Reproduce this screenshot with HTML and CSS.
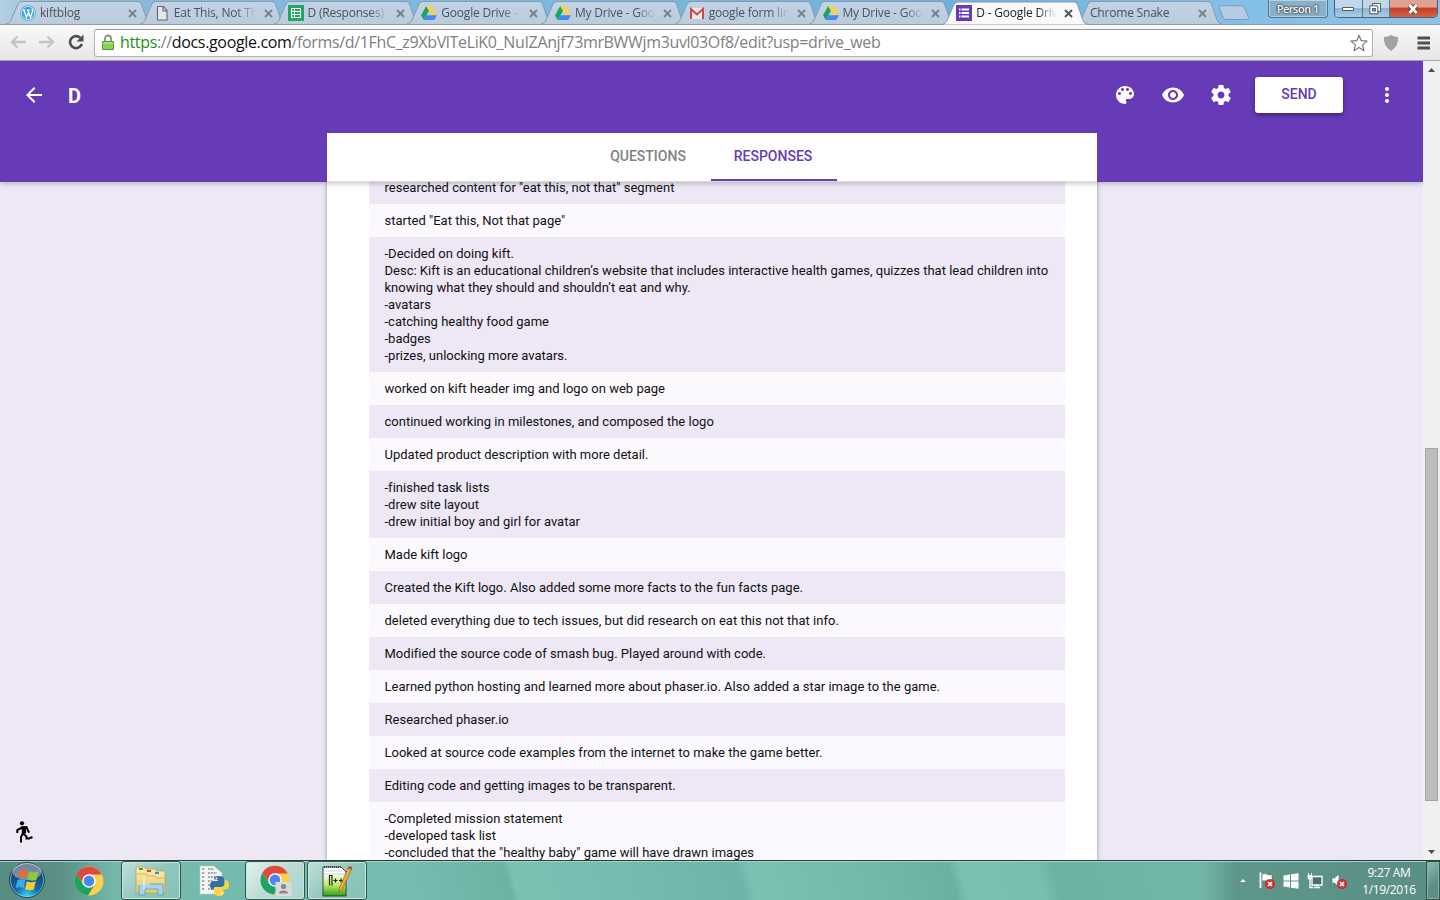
FILE: index.html
```html
<!DOCTYPE html>
<html lang="en">
<head>
<meta charset="utf-8">
<title>D - Google Drive</title>
<link rel="stylesheet" href="styles.css">
</head>
<body>
<svg class="defs" width="0" height="0" aria-hidden="true">
  <defs>
    <linearGradient id="tabfill" x1="0" y1="0" x2="0" y2="1"><stop offset="0" stop-color="#c2d3e5"/><stop offset="1" stop-color="#b9cbdd"/></linearGradient>
    <radialGradient id="orb" cx=".5" cy=".95" r=".8"><stop offset="0" stop-color="#35d5fa"/><stop offset=".4" stop-color="#0e6fae"/><stop offset="1" stop-color="#1d3f63"/></radialGradient>
    <linearGradient id="folder" x1="0" y1="0" x2="0" y2="1"><stop offset="0" stop-color="#fbeeb2"/><stop offset="1" stop-color="#e9c869"/></linearGradient>
    <linearGradient id="note" x1="0" y1="0" x2="0" y2="1"><stop offset=".2" stop-color="#fff"/><stop offset=".6" stop-color="#c2ee6a"/><stop offset="1" stop-color="#2f9e16"/></linearGradient>
    <symbol id="shape" viewBox="0 0 146 24"><path d="M0 24C3 23.500 4 22 5 20L12 4Q13.500 1.500 16 1.500H132Q134.500 1.500 135.500 4L141 20Q142 23.500 146 24"/></symbol>
    <symbol id="drive" viewBox="0 0 16 14"><path fill="#1da462" d="M5.300 0 0 9.300 2.700 14 8 4.700z"/><path fill="#ffcf48" d="M5.300 0H10.700L16 9.300H10.700z"/><path fill="#4688f4" d="M5.300 9.300H16L13.300 14H2.700z"/></symbol>
    <symbol id="chrome" viewBox="0 0 30 30"><circle cx="15" cy="15" r="14.500" fill="#fcd04b"/><path fill="#dd4b3e" d="M2.300 8A14.500 14.500 0 0 1 27.800 8.500H15L9.300 18z"/><path fill="#1da362" d="M2.300 8A14.500 14.500 0 0 0 14 29.500L20.500 19 15 21.500 9.400 18.500z"/><circle cx="15" cy="15" r="6.800" fill="#fff"/><circle cx="15" cy="15" r="5.400" fill="#4a87ee"/></symbol>
    <symbol id="redx" viewBox="0 0 10 10"><circle cx="5" cy="5" r="4.800" fill="#d9302c" stroke="#a31b1b" stroke-width=".4"/><path d="M3 3l4 4M7 3 3 7" stroke="#fff" stroke-width="1.600"/></symbol>
  </defs>
</svg>
<div class="window">
  <div class="tabstrip">
    <div class="tabs">
      <div class="tab"><svg class="bg"><use href="#shape"/></svg>
        <svg class="fav" viewBox="0 0 16 16"><circle cx="8" cy="8" r="7.800" fill="#3aa5d4"/><circle cx="8" cy="8" r="6.700" fill="none" stroke="#e8f3f9" stroke-width=".8"/><path d="M2.800 5.200h2.500M6.800 5.200h3M4 5.500l2.500 7L8.300 8M7.800 5.500l2.700 7L12.600 6q0-1.500-1-2.300" fill="none" stroke="#fff" stroke-width="1.300"/></svg>
        <span class="title">kiftblog</span><svg class="x" viewBox="0 0 9 9"><path d="M1 1l7 7M8 1 1 8"/></svg></div>
      <div class="tab"><svg class="bg"><use href="#shape"/></svg>
        <svg class="fav" viewBox="0 0 16 16"><path d="M3.500 1.500h6l3.500 4v9.500h-9.500zM9 1.500v4.500h4" fill="#e4e9ee" stroke="#666" stroke-width="1.100"/></svg>
        <span class="title">Eat This, Not Th</span><svg class="x" viewBox="0 0 9 9"><path d="M1 1l7 7M8 1 1 8"/></svg></div>
      <div class="tab"><svg class="bg"><use href="#shape"/></svg>
        <svg class="fav" viewBox="0 0 16 16"><path fill="#23a566" d="M0 0h16v16H0z"/><path d="M3.500 3.500h9v9h-9zM3.500 6.500h9M3.500 9.500h9M6.500 3.500v9" fill="none" stroke="#fff"/></svg>
        <span class="title">D (Responses)</span><svg class="x" viewBox="0 0 9 9"><path d="M1 1l7 7M8 1 1 8"/></svg></div>
      <div class="tab"><svg class="bg"><use href="#shape"/></svg>
        <svg class="fav"><use href="#drive"/></svg>
        <span class="title">Google Drive -</span><svg class="x" viewBox="0 0 9 9"><path d="M1 1l7 7M8 1 1 8"/></svg></div>
      <div class="tab"><svg class="bg"><use href="#shape"/></svg>
        <svg class="fav"><use href="#drive"/></svg>
        <span class="title">My Drive - Goo</span><svg class="x" viewBox="0 0 9 9"><path d="M1 1l7 7M8 1 1 8"/></svg></div>
      <div class="tab"><svg class="bg"><use href="#shape"/></svg>
        <svg class="fav" viewBox="0 0 16 16"><path fill="#ece9ea" d="M1 3h14v11H1z"/><path d="M2 14V4l6 5.500L14 4v10" fill="none" stroke="#cf4a41" stroke-width="2"/></svg>
        <span class="title">google form lin</span><svg class="x" viewBox="0 0 9 9"><path d="M1 1l7 7M8 1 1 8"/></svg></div>
      <div class="tab"><svg class="bg"><use href="#shape"/></svg>
        <svg class="fav"><use href="#drive"/></svg>
        <span class="title">My Drive - Goo</span><svg class="x" viewBox="0 0 9 9"><path d="M1 1l7 7M8 1 1 8"/></svg></div>
      <div class="tab active"><svg class="bg"><use href="#shape"/></svg>
        <svg class="fav" viewBox="0 0 16 16"><path fill="#673ab7" d="M0 0h16v16H0z"/><path d="M3 4.500h1.500M3 8h1.500M3 11.500h1.500M5.500 4.500h7.500M5.500 8h7.500M5.500 11.500h7.500" stroke="#fff" stroke-width="1.800"/></svg>
        <span class="title">D - Google Driv</span><svg class="x" viewBox="0 0 9 9"><path d="M1 1l7 7M8 1 1 8"/></svg></div>
      <div class="tab nofav"><svg class="bg"><use href="#shape"/></svg>
        <span class="title">Chrome Snake</span><svg class="x" viewBox="0 0 9 9"><path d="M1 1l7 7M8 1 1 8"/></svg></div>
    </div>
    <svg class="newtab" viewBox="0 0 32 16"><path d="M1 2Q1 .7 3 .7H23Q25.500.7 26.500 3L30.500 12.500Q31 14.500 29 14.500H8Q6 14.500 5 12z" fill="#b4cde2" stroke="#7f9db8"/></svg>
    <div class="person">Person 1</div>
    <div class="winbtns">
      <div class="wb min"><svg width="14" height="8" viewBox="0 0 14 8"><path d="M1.500 2.500h11v3h-11z" fill="#fff" stroke="#4b5b6b"/></svg></div>
      <div class="wb max"><svg width="13" height="12" viewBox="0 0 13 12"><path d="M3.500.5h8v8h-8z" fill="#fff" stroke="#4b5b6b"/><path d="M.8 2.800h8v8h-8z" fill="#fff" stroke="#4b5b6b"/><path d="M3.500 5.500h3v2.500h-3z" fill="#8fb2d0" stroke="#4b5b6b"/></svg></div>
      <div class="wb close"><svg width="14" height="12" viewBox="0 0 14 12"><path d="M3.500 2l7 8M10.500 2l-7 8" stroke="#5a3a3a" stroke-width="4.500"/><path d="M3.500 2l7 8M10.500 2l-7 8" stroke="#fff" stroke-width="2.800"/></svg></div>
    </div>
  </div>

  <div class="toolbar">
    <svg class="nav" viewBox="0 0 18 16"><path d="M17 8H3M8.500 2.500 3 8l5.500 5.500" fill="none" stroke="#c4c4c4" stroke-width="2.300"/></svg>
    <svg class="nav fwd" viewBox="0 0 18 16"><path d="M1 8h14M9.500 2.500 15 8l-5.500 5.500" fill="none" stroke="#c4c4c4" stroke-width="2.300"/></svg>
    <svg class="reload" viewBox="0 0 16 16"><path d="M12.300 3.800A6 6 0 1 0 13.800 10" fill="none" stroke="#4e4e4e" stroke-width="2.600"/><path d="M15.500.5v7h-7z" fill="#4e4e4e"/></svg>
    <div class="omnibox">
      <svg class="lock" viewBox="0 0 12 16"><path d="M3 8V4.500a3 3 0 0 1 6 0V8" fill="none" stroke="#8d8d8d" stroke-width="1.800"/><path d="M.5 7.500h11v8H.5z" fill="#8ed05c" stroke="#529c2c"/><path d="M1.500 9h9" stroke="#c4eda5"/></svg>
      <span class="url"><span class="sec">https</span>://<span class="host">docs.google.com</span>/forms/d/1FhC_z9XbVlTeLiK0_NuIZAnjf73mrBWWjm3uvl03Of8/edit?usp=drive_web</span>
      <svg class="star" viewBox="0 0 18 18"><path d="M9 1.200l2.200 5.500 5.900.4-4.500 3.800 1.400 5.800L9 13.600l-5 3.100 1.400-5.800L.9 7.100l5.900-.4z" fill="#fff" stroke="#777" stroke-width="1.200" stroke-linejoin="round"/></svg>
    </div>
    <svg class="shield" viewBox="0 0 16 16"><path d="M8 0Q11 2 15 2Q16 11 8 16Q0 11 1 2Q5 2 8 0z" fill="#a2a2a2"/></svg>
    <svg class="menu" viewBox="0 0 14 14"><path d="M.5 2h12.500M.5 7h12.500M.5 12h12.500" stroke="#4f4f4f" stroke-width="3"/></svg>
  </div>

  <div class="viewport">
    <div class="page">
      <header class="appbar">
        <div class="approw">
          <svg class="i back" viewBox="0 0 24 24"><path d="M20 11H7.830l5.590-5.590L12 4l-8 8 8 8 1.410-1.410L7.830 13H20v-2z"/></svg>
          <span class="doc">D</span>
          <svg class="i" viewBox="0 0 24 24"><path d="M12 3c-4.970 0-9 4.030-9 9s4.030 9 9 9c.83 0 1.500-.67 1.500-1.500 0-.39-.15-.74-.39-1.010-.23-.26-.38-.61-.38-.99 0-.83.67-1.500 1.500-1.500H16c2.760 0 5-2.240 5-5 0-4.420-4.030-8-9-8zm-5.500 9c-.83 0-1.500-.67-1.500-1.500S5.670 9 6.500 9 8 9.670 8 10.500 7.330 12 6.500 12zm3-4C8.670 8 8 7.330 8 6.500S8.670 5 9.500 5s1.500.67 1.500 1.500S10.330 8 9.500 8zm5 0c-.83 0-1.500-.67-1.500-1.500S13.670 5 14.500 5s1.500.67 1.500 1.500S15.330 8 14.500 8zm3 4c-.83 0-1.500-.67-1.500-1.500S16.670 9 17.500 9s1.500.67 1.500 1.500-.67 1.500-1.500 1.500z"/></svg>
          <svg class="i" viewBox="0 0 24 24"><path d="M12 4.500C7 4.500 2.730 7.610 1 12c1.730 4.390 6 7.500 11 7.500s9.270-3.110 11-7.500c-1.730-4.390-6-7.500-11-7.500zM12 17c-2.760 0-5-2.240-5-5s2.240-5 5-5 5 2.240 5 5-2.240 5-5 5zm0-8c-1.660 0-3 1.340-3 3s1.340 3 3 3 3-1.340 3-3-1.340-3-3-3z"/></svg>
          <svg class="i" viewBox="0 0 24 24"><path d="M19.430 12.980c.04-.32.07-.64.07-.98s-.03-.66-.07-.98l2.110-1.650c.19-.15.24-.42.12-.64l-2-3.460c-.12-.22-.39-.3-.61-.22l-2.490 1c-.52-.4-1.080-.73-1.690-.98l-.38-2.650C14.460 2.180 14.250 2 14 2h-4c-.25 0-.46.18-.49.42l-.38 2.650c-.61.25-1.170.59-1.690.98l-2.490-1c-.23-.09-.49 0-.61.22l-2 3.460c-.13.22-.07.49.12.64l2.110 1.650c-.04.32-.07.65-.07.98s.03.66.07.98l-2.110 1.650c-.19.15-.24.42-.12.64l2 3.460c.12.22.39.3.61.22l2.490-1c.52.4 1.080.73 1.690.98l.38 2.650c.03.24.24.42.49.42h4c.25 0 .46-.18.49-.42l.38-2.650c.61-.25 1.170-.59 1.690-.98l2.490 1c.23.09.49 0 .61-.22l2-3.460c.12-.22.07-.49-.12-.64l-2.110-1.650zM12 15.500c-1.930 0-3.500-1.570-3.500-3.500s1.570-3.500 3.500-3.500 3.500 1.570 3.500 3.500-1.570 3.500-3.500 3.500z"/></svg>
          <div class="send">SEND</div>
          <svg class="i more" viewBox="0 0 24 24"><path d="M12 8c1.100 0 2-.9 2-2s-.9-2-2-2-2 .9-2 2 .9 2 2 2zm0 2c-1.100 0-2 .9-2 2s.9 2 2 2 2-.9 2-2-.9-2-2-2zm0 6c-1.100 0-2 .9-2 2s.9 2 2 2 2-.9 2-2-.9-2-2-2z"/></svg>
        </div>
        <nav class="formtabs"><span class="ft">QUESTIONS</span><span class="ft sel">RESPONSES</span></nav>
      </header>
      <main class="card">
        <div class="row">researched content for "eat this, not that" segment</div>
        <div class="row">started "Eat this, Not that page"</div>
        <div class="row">-Decided on doing kift.
Desc: Kift is an educational children’s website that includes interactive health games, quizzes that lead children into
knowing what they should and shouldn’t eat and why.
-avatars
-catching healthy food game
-badges
-prizes, unlocking more avatars.</div>
        <div class="row">worked on kift header img and logo on web page</div>
        <div class="row">continued working in milestones, and composed the logo</div>
        <div class="row">Updated product description with more detail.</div>
        <div class="row">-finished task lists
-drew site layout
-drew initial boy and girl for avatar</div>
        <div class="row">Made kift logo</div>
        <div class="row">Created the Kift logo. Also added some more facts to the fun facts page.</div>
        <div class="row">deleted everything due to tech issues, but did research on eat this not that info.</div>
        <div class="row">Modified the source code of smash bug. Played around with code.</div>
        <div class="row">Learned python hosting and learned more about phaser.io. Also added a star image to the game.</div>
        <div class="row">Researched phaser.io</div>
        <div class="row">Looked at source code examples from the internet to make the game better.</div>
        <div class="row">Editing code and getting images to be transparent.</div>
        <div class="row">-Completed mission statement
-developed task list
-concluded that the "healthy baby" game will have drawn images</div>
      </main>
      <svg class="runner" viewBox="0 0 18 22"><circle cx="6" cy="2.300" r="2.100"/><path d="M1.300 12V9L6 6.500 10.500 6l1.800 4.500 1.200 1M7 12.500l3.500 3v2h2.500l3.500-1.500M7 12l-2 4v5.500" fill="none" stroke="#000" stroke-width="2"/><path d="M5.500 5.500h4.500L10 12.500 6 13z"/></svg>
    </div>
    <div class="scrollbar">
      <svg class="arrow" viewBox="0 0 7 4"><path d="M0 4 3.500 0 7 4z"/></svg>
      <div class="thumb"></div>
      <svg class="arrow" viewBox="0 0 7 4"><path d="M0 0h7L3.500 4z"/></svg>
    </div>
  </div>

  <div class="taskbar">
    <svg class="start" viewBox="0 0 38 38"><circle cx="19" cy="19" r="17.500" fill="url(#orb)" stroke="#27455c"/><circle cx="19" cy="19" r="16.500" fill="none" stroke="#b5d0dc" stroke-width=".9" opacity=".7"/><ellipse cx="19" cy="10.500" rx="14.500" ry="8.500" fill="#fff" opacity=".38"/><path fill="#ee6a2c" d="M12 9.500q3.500-2 7.500.3l-1.700 8q-3.500-2.300-7.500-.5z"/><path fill="#93c83e" d="M21 10.500q4 2 9.500 0l-2 8.200q-4.500 2-9-.2z"/><path fill="#3da9ea" d="M9.500 19q3.500-1.800 7.800.3l-1.600 8q-3.500-2-8-.5z"/><path fill="#fccb30" d="M18.800 20.200q4 2 9 0l-2 8.300q-4.500 1.700-8.700-.3z"/></svg>
    <div class="tb plain"><svg width="30" height="30"><use href="#chrome"/></svg></div>
    <div class="tb open"><svg width="32" height="30" viewBox="0 0 32 30"><path d="M1 3l1-2h8l1 2h10v2h9v22H1z" fill="url(#folder)" stroke="#c09c44" stroke-width=".7"/><path fill="#2fa336" d="M4 2h4v2H4z"/><path fill="#cf4733" d="M12 4h4v2h-4z"/><path fill="#3d86d8" d="M20 6h4v2h-4z"/><path d="M2 8h9l1 2h8l1 2h9" stroke="#d6b35d" fill="none"/><path d="M4 29V18h24v11h-5v-6H10v6z" fill="#a4d4ee" stroke="#5799c2" stroke-width=".8"/><path d="M9 12v12M3 18h12" stroke="#fff" stroke-width=".8"/></svg></div>
    <div class="tb plain"><svg width="32" height="32" viewBox="0 0 32 32"><path d="M2 1h14l8 7v21H2z" fill="#f4f4f4" stroke="#c2c8c6" stroke-width=".6"/><path d="M4 4h3M10 4h6M4 8h3M10 8h9M4 12h3M10 12h10M4 16h3M10 16h5M4 20h3M10 20h4M4 24h3M10 24h6" stroke="#8d9291" stroke-width="1.300" stroke-dasharray="2 .8"/><path d="M16 14q0-3 5-3t5 3v5q0 3-3 3h-5q-2.500 0-2.500 3-3.500-.5-3.500-5 0-4 4-4h5" fill="#356f9f"/><path d="M27 15q4 .5 4 5t-4 4.500h-5v1h4v2.500q0 3-5 3t-5-3V25q0-3 3-3h4q4 0 4-4z" fill="#fdd340"/><circle cx="18.500" cy="13.500" r=".9" fill="#fff"/><circle cx="23.500" cy="28.500" r=".9" fill="#fff"/></svg></div>
    <div class="tb open bright"><svg width="32" height="32" viewBox="0 0 32 32"><use href="#chrome" x="0" y="0" width="30" height="30"/><path fill="#d9dbda" d="M15.500 17h16v14h-16z"/><circle cx="23.500" cy="21.500" r="2.600" fill="#888"/><path d="M19 28.500q0-3 4.500-3t4.500 3z" fill="#888"/></svg></div>
    <div class="tb open"><svg width="32" height="32" viewBox="0 0 32 32"><path d="M2 2h18l5 5v24H2z" fill="url(#note)" stroke="#333" stroke-width=".9"/><path d="M3 6h18M3 9h21" stroke="#b9c8e0" stroke-width=".8"/><path d="M3 2h17" stroke="#444" stroke-width="2" stroke-dasharray="1 1"/><path d="M8.500 20.500v-10h2.500v10M12.500 15.500h4M14.500 13.500v4M18 15.500h4M20 13.500v4" fill="none" stroke="#222" stroke-width="1.200"/><path d="M27 3l3.500 1.500L21 25l-3 2 .2-3.500z" fill="#f2a93b" stroke="#8b5a1c" stroke-width=".6"/><path d="M27 3l1-2 3.500 1.500-1 2z" fill="#b34545"/></svg></div>
    <div class="tray">
      <svg width="8" height="5" viewBox="0 0 8 5"><path d="M.3 4.500 4 .5l3.700 4z" fill="#fff" stroke="#41665f" stroke-width=".5"/></svg>
      <svg class="flag" width="16" height="17" viewBox="0 0 16 17"><path d="M1.500.5v15.500" stroke="#fff" stroke-width="1.800"/><path d="M3 2q3-1 5 .3t5 .2v7q-3 .7-5-.3T3 9z" fill="#fff" stroke="#3c625b" stroke-width=".5"/><use href="#redx" x="6" y="7" width="10" height="10"/></svg>
      <svg class="win" width="16" height="16" viewBox="0 0 16 16"><path fill="#fff" d="M.5 2.500 7 1.500v6H.5zM8 1.300 15.500.2v7.300H8zM.5 8.500H7v6L.5 13.500zM8 8.500h7.500v7.300L8 14.700z"/></svg>
      <svg class="net" width="16" height="16" viewBox="0 0 16 16"><path d="M5 3.500h10v8.500H5z" fill="#44726a" stroke="#fff" stroke-width="1.300"/><path d="M7 14.500h6M10 12v2M3 6v8.500h3" stroke="#fff" stroke-width="1.300" fill="none"/><path d="M1 2.500h4V5L4 6.500H2L1 5zM1.500 0v3M4.500 0v3" fill="#fff" stroke="#fff" stroke-width=".9"/></svg>
      <svg class="vol" width="16" height="16" viewBox="0 0 16 16"><path d="M1 5h2.500L8 1v13L3.500 10H1z" fill="#fff" stroke="#476b65" stroke-width=".6"/><use href="#redx" x="6" y="6" width="10" height="10"/></svg>
      <div class="clock"><span>9:27 AM</span><span>1/19/2016</span></div>
      <div class="peek"></div>
    </div>
  </div>
</div>
</body>
</html>
```
FILE: styles.css
```css
* { box-sizing: border-box; }
body { margin: 0; width: 1440px; height: 900px; overflow: hidden; }
svg { display: block; flex: none; }
.defs { position: absolute; }
.window { display: flex; flex-direction: column; width: 1440px; height: 900px; }

.tabstrip { display: flex; height: 25px; padding-left: 6px; align-items: flex-start; background: linear-gradient(90deg, #b4cfe0 0, #8abbd9 60px, #7cb9df 500px, #6fb1dc 950px, #82bfe6 1220px, #8fc2e6 100%); border-bottom: 1px solid #8f9fae; font-family: "Open Sans", sans-serif; }
.tabs { display: flex; }
.tab { position: relative; display: flex; align-items: center; width: 146px; height: 25px; margin-right: -12.250px; padding: 1px 15px 0 14px; }
.tab .bg { position: absolute; left: 0; top: 0; width: 146px; height: 24px; fill: url(#tabfill); stroke: #8799ab; z-index: 0; }
.tab.active { z-index: 2; }
.tab.active .bg { fill: #f9f9f9; height: 25px; }
.fav { position: relative; width: 16px; height: 16px; margin-right: 4px; }
.title { position: relative; flex: 1; height: 18px; line-height: 18px; font-size: 12px; letter-spacing: -.2px; color: #4c5359; white-space: nowrap; -webkit-mask-image: linear-gradient(90deg, #000 75%, transparent 98%); mask-image: linear-gradient(90deg, #000 75%, transparent 98%); margin-right: 6px; }
.nofav .title { -webkit-mask-image: none; mask-image: none; }
.tab.active .title { color: #222; }
.x { position: relative; width: 9px; height: 9px; stroke: #76808a; stroke-width: 1.800; }
.tab.active .x { stroke: #555; }
.newtab { width: 32px; height: 16px; margin: 5px 0 0 8px; }
.person { width: 60px; height: 18px; margin-left: 18px; border: 1px solid #4d7390; border-top: 0; border-radius: 0 0 4px 4px; background: #8aafc9; box-shadow: inset 0 0 0 1px #b4d2e6; color: #fff; font-size: 11px; font-weight: 600; line-height: 17px; letter-spacing: -.5px; text-align: center; text-shadow: 0 0 2px #222, 0 0 2px #222; }
.winbtns { display: flex; width: 104px; height: 18px; margin-left: 6px; border: 1px solid #46617a; border-top: 0; border-radius: 0 0 5px 5px; overflow: hidden; }
.wb { display: flex; align-items: center; justify-content: center; width: 28px; background: linear-gradient(#c1d8ea 45%, #8db4d2 50%, #a9cde6); border-right: 1px solid #5b7690; }
.wb.max { width: 27px; }
.wb.close { flex: 1; border: 0; background: linear-gradient(#e0a294 40%, #c43f24 50%, #d4654a); }

.toolbar { display: flex; align-items: center; height: 36px; padding-left: 9px; background: linear-gradient(#f9f9f9, #e6e6e6); border-bottom: 1px solid #a3a3a3; }
.nav { width: 18px; height: 16px; margin-top: -1px; }
.fwd { margin-left: 11px; }
.reload { width: 16px; height: 16px; margin: -1px 0 0 12px; }
.omnibox { display: flex; align-items: center; width: 1279px; height: 28px; margin-left: 10px; padding: 0 4px 0 7px; background: #fff; border: 1px solid #b1b1b1; border-top-color: #999; border-radius: 3px; }
.lock { width: 12px; height: 16px; margin-top: -1px; }
.url { flex: 1; margin-left: 6px; margin-top: -1px; font-family: "Open Sans", sans-serif; font-size: 16px; letter-spacing: -.345px; line-height: 24px; color: #808080; white-space: nowrap; }
.sec { color: #1b8f1b; }
.host { color: #111; }
.star { width: 18px; height: 18px; }
.shield { width: 16px; height: 16px; margin-left: 10px; }
.menu { width: 14px; height: 14px; margin-left: 18px; }

.viewport { display: flex; height: 799px; }
.page { position: relative; display: flex; flex-direction: column; align-items: center; width: 1423px; height: 799px; background: #ede7f6; overflow: hidden; font-family: Roboto, sans-serif; }
.appbar { position: relative; z-index: 2; display: flex; flex-direction: column; align-items: center; flex: none; width: 1423px; height: 121px; background: #673ab7; box-shadow: 0 1px 6px rgba(0,0,0,.26); }
.approw { display: flex; align-items: center; width: 100%; height: 72px; padding: 0 24px 4px 22px; }
.i { width: 24px; height: 24px; fill: #fff; margin-right: 24px; }
.back { margin-right: 22px; }
.doc { flex: 1; color: #fff; font-size: 20px; font-weight: 700; line-height: 24px; padding-top: 2px; }
.send { width: 88px; height: 36px; margin-right: 32px; margin-left: -2px; background: #fff; border-radius: 3px; color: #673ab7; font-size: 14px; font-weight: 500; line-height: 35px; text-align: center; box-shadow: 0 2px 4px rgba(0,0,0,.4); }
.more { margin-right: 0; }
.formtabs { display: flex; justify-content: center; flex: none; width: 770px; height: 49px; margin-left: 1px; background: #fff; border-bottom: 1px solid #dcdcdc; }
.ft { width: 124px; height: 48px; padding-right: 2px; line-height: 47px; text-align: center; font-size: 14px; font-weight: 500; color: #818181; }
.ft.sel { width: 126px; color: #673ab7; border-bottom: 2px solid #673ab7; }
.card { flex: none; width: 770px; margin: -11px 0 0 1px; padding: 0 32px 0 42px; background: #fff; box-shadow: 0 1px 4px rgba(0,0,0,.37); }
.row { padding: 8px 0 8px 15.500px; font-size: 13px; line-height: 17px; letter-spacing: .01px; color: #111; white-space: pre; background: #fbf9fe; }
.row:nth-child(odd) { background: #ede7f6; }
.runner { position: absolute; left: 16px; top: 760px; width: 18px; height: 22px; }
.scrollbar { display: flex; flex-direction: column; align-items: center; width: 17px; height: 799px; padding: 7px 0 6px; background: #f0f0f0; }
.arrow { width: 7px; height: 4px; fill: #4d4d4d; }
.thumb { width: 13px; height: 353px; margin: 376px 0 auto; background: #bcbcbc; border: 1px solid #a5a5a5; }

.taskbar { display: flex; height: 40px; padding-left: 8px; border-top: 1px solid #27403c; box-shadow: inset 0 1px #a0d2c8; background: linear-gradient(90deg, #578c82 0, #5a9085 60px, rgba(90,144,133,0) 115px, rgba(95,150,140,0) 1200px, #5f968c 1235px, #598f84 100%), linear-gradient(75deg, #74b8ab 0, #76bcb0 400px, #6cb2a5 495px, #7bc1b4 502px, #76bcb0 600px, #6fb4a8 720px, #7bc1b4 732px, #72b8ab 850px, #6ab0a3 925px, #7ac1b4 935px, #78bfb2 1010px, #6cb1a4 1025px, #72b9ac 1200px); font-family: "Open Sans", sans-serif; }
.start { width: 38px; height: 38px; margin-right: 12px; }
.tb { display: flex; align-items: center; justify-content: center; width: 60px; height: 39px; margin-right: 2px; }
.plain { padding-left: 2px; }
.plain:nth-child(2) { margin-right: 3px; }
.open { border: 1px solid #2f5750; border-radius: 3px; background: linear-gradient(135deg, #c2e0da, #90c8be 50%, #84c1b6); box-shadow: inset 0 0 0 1px #c7e6e0; }
.bright { background: linear-gradient(135deg, #e4f2ef, #bcdcd6 50%, #a9d4cc); padding-left: 2px; }
.tray { display: flex; align-items: center; margin-left: auto; }
.flag { margin-left: 12px; }
.win, .net, .vol { margin-left: 8px; }
.clock { display: flex; flex-direction: column; width: 74px; margin-left: 5px; color: #fff; font-size: 12px; line-height: 17px; letter-spacing: -.35px; text-align: center; }
.peek { width: 14px; height: 39px; border: 1px solid #35564f; background: linear-gradient(135deg, #8fbdb4, #5b8f85 60%); box-shadow: inset 0 0 0 1px #83b1a8; }
```
